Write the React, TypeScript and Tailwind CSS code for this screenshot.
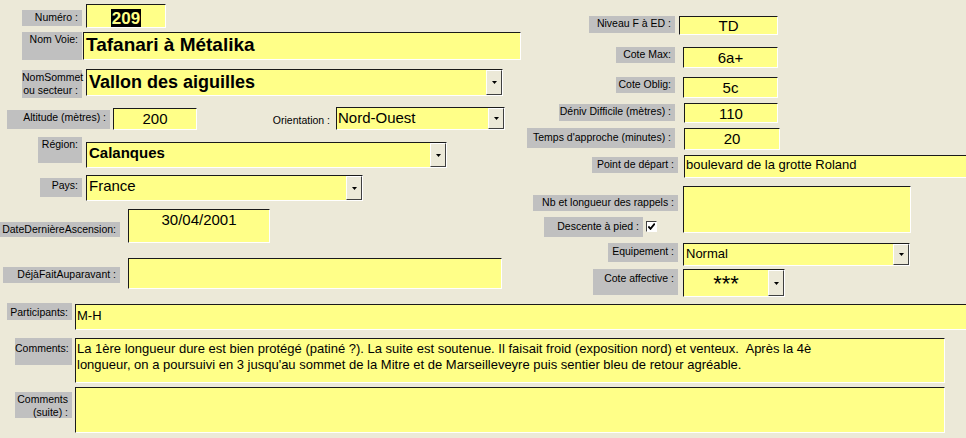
import type { ReactNode } from 'react';

// Access-style form: grey labels, yellow sunken fields, combo buttons
const Lbl = ({ className = '', children }: { className?: string; children: ReactNode }) => (
    <div className={`shrink-0 whitespace-nowrap bg-[#c0c0c0] pr-[4px] pt-[1px] text-right text-[10.5px] leading-[13px] text-black ${className}`}>
        {children}
    </div>
);

const DropBtn = () => (
    <div className="flex w-[16px] shrink-0 items-center justify-center border-t border-l border-t-white border-l-white border-b border-r border-b-[#404040] border-r-[#404040] bg-[#ece9d8]">
        <svg width="5" height="3" viewBox="0 0 5 3">
            <path d="M0 0h5L2.5 3z" fill="#000" />
        </svg>
    </div>
);

const Field = ({
    className = '',
    inner = '',
    combo,
    children,
}: {
    className?: string;
    inner?: string;
    combo?: boolean;
    children?: ReactNode;
}) => (
    <div className={`flex shrink-0 overflow-hidden border-t border-l border-t-[#1a1a1a] border-l-[#1a1a1a] border-b border-r border-b-white border-r-white bg-[#ffff88] ${className}`}>
        <div className={`min-w-0 flex-1 overflow-hidden whitespace-nowrap text-black ${inner}`}>{children}</div>
        {combo && <DropBtn />}
    </div>
);

const App = () => {
    const num = 'text-center text-[15px] leading-[18px] pt-[1px]';

    return (
        <div className="h-[438px] w-[966px] overflow-hidden bg-[#ece9d8] font-['Liberation_Sans',Arial,sans-serif]">
            <div className="flex h-[300px]">
                {/* left column */}
                <div className="flex w-[520px] shrink-0 flex-col">
                    <div className="flex h-[30px] items-start">
                        <Lbl className="ml-[22px] mt-[10px] h-[16px] w-[60px]">Numéro :</Lbl>
                        <Field className="ml-[4px] mt-[4px] h-[24px] w-[80px]" inner="pt-[2px] text-center">
                            <span className="inline-block bg-black px-[1px] text-[17px] font-bold leading-[19px] text-[#ffff88]">209</span>
                        </Field>
                    </div>
                    <div className="flex h-[36px] items-start">
                        <Lbl className="ml-[22px] mt-[2px] h-[28px] w-[60px]">Nom Voie:</Lbl>
                        <Field className="ml-[1px] mt-[2px] h-[28px] w-[438px]" inner="pl-[2px] text-[19px] font-bold leading-[24px]">
                            Tafanari à Métalika
                        </Field>
                    </div>
                    <div className="flex h-[38px] items-start">
                        <Lbl className="ml-[22px] mt-[4px] h-[28px] w-[60px]">
                            NomSommet
                            <br />
                            ou secteur :
                        </Lbl>
                        <Field combo className="ml-[4px] mt-[3px] h-[27px] w-[417px]" inner="pl-[2px] text-[18px] font-bold leading-[24px]">
                            Vallon des aiguilles
                        </Field>
                    </div>
                    <div className="flex h-[32px] items-start">
                        <Lbl className="ml-[7px] mt-[6px] h-[19px] w-[103px]">Altitude (mètres) :</Lbl>
                        <Field className="ml-[3px] mt-[4px] h-[22px] w-[84px]" inner={num}>
                            200
                        </Field>
                        <div className="ml-[69px] mt-[10px] w-[64px] shrink-0 whitespace-nowrap text-right text-[10.5px] leading-[13px]">Orientation :</div>
                        <Field combo className="ml-[6px] mt-[3px] h-[23px] w-[169px]" inner="pl-[1px] text-[15px] leading-[19px]">
                            Nord-Ouest
                        </Field>
                    </div>
                    <div className="flex h-[36px] items-start">
                        <Lbl className="ml-[38px] mt-[1px] h-[26px] w-[44px]">Région:</Lbl>
                        <Field combo className="ml-[4px] mt-[6px] h-[26px] w-[361px]" inner="pl-[2px] text-[15px] font-bold leading-[19px]">
                            Calanques
                        </Field>
                    </div>
                    <div className="flex h-[34px] items-start">
                        <Lbl className="ml-[40px] mt-[6px] h-[19px] w-[42px]">Pays:</Lbl>
                        <Field combo className="ml-[4px] mt-[3px] h-[26px] w-[277px]" inner="pl-[2px] text-[15px] leading-[19px]">
                            France
                        </Field>
                    </div>
                    <div className="flex h-[50px] items-start">
                        <Lbl className="mt-[16px] h-[15px] w-[120px] pr-[2px] pt-0">DateDernièreAscension:</Lbl>
                        <Field className="ml-[8px] mt-[3px] h-[34px] w-[142px]" inner={num}>
                            30/04/2001
                        </Field>
                    </div>
                    <div className="flex h-[44px] items-start">
                        <Lbl className="ml-[3px] mt-[11px] h-[16px] w-[117px]">DéjàFaitAuparavant :</Lbl>
                        <Field className="ml-[8px] mt-[2px] h-[31px] w-[374px]" />
                    </div>
                </div>

                {/* right column */}
                <div className="flex flex-1 flex-col">
                    <div className="flex h-[42px] items-start">
                        <Lbl className="ml-[69px] mt-[16px] h-[17px] w-[86px]">Niveau F à ED :</Lbl>
                        <Field className="ml-[4px] mt-[16px] h-[19px] w-[99px]" inner="text-center text-[15px] leading-[17px]">
                            TD
                        </Field>
                    </div>
                    <div className="flex h-[32px] items-start">
                        <Lbl className="ml-[96px] mt-[5px] h-[16px] w-[59px]">Cote Max:</Lbl>
                        <Field className="ml-[8px] mt-[5px] h-[21px] w-[95px]" inner={num}>
                            6a+
                        </Field>
                    </div>
                    <div className="flex h-[28px] items-start">
                        <Lbl className="ml-[96px] mt-[3px] h-[16px] w-[59px]">Cote Oblig:</Lbl>
                        <Field className="ml-[8px] mt-[3px] h-[21px] w-[95px]" inner={num}>
                            5c
                        </Field>
                    </div>
                    <div className="flex h-[25px] items-start">
                        <Lbl className="ml-[39px] mt-[2px] h-[17px] w-[116px]">Déniv Difficile (mètres) :</Lbl>
                        <Field className="ml-[9px] mt-[1px] h-[20px] w-[94px]" inner={num}>
                            110
                        </Field>
                    </div>
                    <div className="flex h-[27px] items-start">
                        <Lbl className="ml-[7px] mt-[1px] h-[20px] w-[148px] pt-[3px]">Temps d'approche (minutes) :</Lbl>
                        <Field className="ml-[9px] mt-[1px] h-[22px] w-[96px]" inner={num}>
                            20
                        </Field>
                    </div>
                    <div className="flex h-[30px] items-start">
                        <Lbl className="ml-[72px] mt-[3px] h-[16px] w-[86px]">Point de départ :</Lbl>
                        <Field className="ml-[6px] mt-[1px] h-[23px] w-[300px]" inner="pl-[1px] text-[13px] leading-[17px]">
                            boulevard de la grotte Roland
                        </Field>
                    </div>
                    <div className="flex h-[57px] items-start">
                        <div className="flex w-[163px] shrink-0 flex-col">
                            <Lbl className="ml-[13px] mt-[11px] h-[16px] w-[145px]">Nb et longueur des rappels :</Lbl>
                            <div className="ml-[24px] mt-[6px] flex items-start">
                                <Lbl className="h-[20px] w-[99px] pt-[3px]">Descente à pied :</Lbl>
                                <div className="ml-[3px] mt-[4px] flex h-[11px] w-[11px] items-center justify-center border-t border-l border-t-[#404040] border-l-[#404040] border-b border-r border-b-white border-r-white bg-white">
                                    <svg width="7" height="7" viewBox="0 0 7 7">
                                        <path d="M0.3 3.4l2.2 2.4L6.8 0.6" stroke="#000" strokeWidth="1.9" fill="none" />
                                    </svg>
                                </div>
                            </div>
                        </div>
                        <Field className="mt-[2px] h-[47px] w-[228px]" />
                    </div>
                    <div className="flex h-[27px] items-start">
                        <Lbl className="ml-[88px] mt-[2px] h-[19px] w-[70px] pt-[2px]">Equipement :</Lbl>
                        <Field combo className="ml-[5px] mt-[2px] h-[23px] w-[227px]" inner="pl-[2px] text-[13px] leading-[19px]">
                            Normal
                        </Field>
                    </div>
                    <div className="flex h-[32px] items-start">
                        <Lbl className="ml-[73px] mt-[1px] h-[26px] w-[85px] pt-[3px]">Cote affective :</Lbl>
                        <Field combo className="ml-[5px] mt-[1px] h-[28px] w-[102px]" inner="pt-[4px] text-center text-[22px] leading-[20px]">
                            ***
                        </Field>
                    </div>
                </div>
            </div>

            {/* bottom rows */}
            <div className="flex h-[36px] items-start">
                <Lbl className="ml-[7px] mt-[3px] h-[17px] w-[65px] pt-[3px]">Participants:</Lbl>
                <Field className="ml-[3px] mt-[4px] h-[26px] w-[900px]" inner="pl-[1px] pt-[3px] text-[13px] leading-[16px]">
                    M-H
                </Field>
            </div>
            <div className="flex h-[50px] items-start">
                <Lbl className="ml-[15px] mt-[2px] h-[27px] w-[57px] pt-[4px]">Comments:</Lbl>
                <Field className="ml-[3px] mt-[2px] h-[45px] w-[870px]" inner="whitespace-pre-wrap pl-[1px] pt-[2px] text-[13px] leading-[16px]">
                    {"La 1ère longueur dure est bien protégé (patiné ?). La suite est soutenue. Il faisait froid (exposition nord) et venteux.  Après la 4è\nlongueur, on a poursuivi en 3 jusqu'au sommet de la Mitre et de Marseilleveyre puis sentier bleu de retour agréable."}
                </Field>
            </div>
            <div className="flex h-[52px] items-start">
                <Lbl className="ml-[15px] mt-[6px] h-[26px] w-[57px] pr-[2px]">
                    Comments
                    <br />
                    (suite) :
                </Lbl>
                <Field className="ml-[3px] mt-[1px] h-[46px] w-[870px]" />
            </div>
        </div>
    );
};

export default App;
